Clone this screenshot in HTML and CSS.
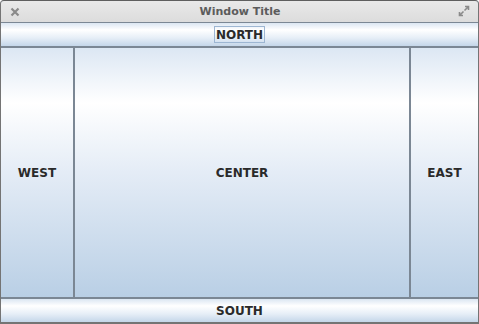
FILE: index.html
```html
<!DOCTYPE html>
<html lang="en">
<head>
  <meta charset="UTF-8">
  <title>Window Title</title>
  <link rel="stylesheet" href="styles.css">
</head>
<body>

  <div class="window">
    <div class="titlebar">
      <svg class="close" width="10" height="10" viewBox="0 0 10 10">
        <path d="M1.5 1.5 L8.5 8.5 M8.5 1.5 L1.5 8.5" stroke="#8a8a8a" stroke-width="2.2"/>
      </svg>
      <span class="title">Window Title</span>
      <svg class="maximize" width="12" height="12" viewBox="0 0 12 12">
        <path d="M6.5 5.5 L10.5 1.5 M7 1.5 H10.5 V5" stroke="#8a8a8a" stroke-width="1.6" fill="none"/>
        <path d="M5.5 6.5 L1.5 10.5 M1.5 7 V10.5 H5" stroke="#8a8a8a" stroke-width="1.6" fill="none"/>
      </svg>
    </div>

    <div class="region north"><span class="focused">NORTH</span></div>

    <div class="middle">
      <div class="region west">WEST</div>
      <div class="region center">CENTER</div>
      <div class="region east">EAST</div>
    </div>

    <div class="region south">SOUTH</div>
  </div>

</body>
</html>
```

FILE: styles.css
```css
body {
  margin: 0;
  font-family: 'DejaVu Sans', sans-serif;
  background: #ffffff;
}

.window {
  width: 479px;
  height: 324px;
  box-sizing: border-box;
  border: 1px solid #747474;
  border-top-color: #5f5f5f;
  border-bottom-width: 2px;
  border-radius: 4px 4px 0 0;
  display: flex;
  flex-direction: column;
  overflow: hidden;
  background: #7b8794;
}

.titlebar {
  height: 21px;
  flex: none;
  display: flex;
  align-items: center;
  justify-content: space-between;
  padding: 0 8px 0 9px;
  background: linear-gradient(#e9e9e9, #dcdcdc);
}

.title {
  font-size: 11px;
  font-weight: bold;
  color: #5c5c5c;
  margin-left: 2px;
}

.close {
  margin-top: 1px;
}

.maximize {
  margin-top: -1px;
}

.region {
  display: flex;
  align-items: center;
  justify-content: center;
  font-size: 12px;
  font-weight: bold;
  color: #2a2a2a;
  box-sizing: border-box;
}

.north,
.south {
  flex: none;
  background: linear-gradient(#dbe6f2 0%, #ffffff 30%, #e6eef7 65%, #c4d6e9 100%);
}

.north {
  border-top: 1px solid #7b8794;
  border-bottom: 2px solid #7b8794;
  height: 26px;
}

.south {
  border-top: 2px solid #7b8794;
  height: 25px;
}

.focused {
  border: 1px solid #9db6d2;
  padding: 1px 1px 0;
  line-height: 14px;
}

.middle {
  flex: 1;
  display: flex;
  gap: 2px;
}

.middle .region {
  background: linear-gradient(#dce7f3 0%, #ffffff 22%, #e4ecf6 50%, #b9cfe5 100%);
}

.west {
  width: 72px;
  flex: none;
}

.center {
  flex: 1;
}

.east {
  width: 67px;
  flex: none;
}
```
